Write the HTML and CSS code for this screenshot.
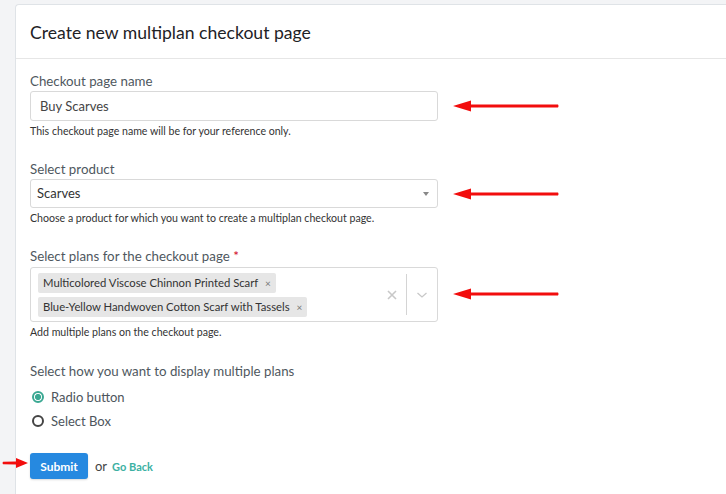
FILE: index.html
```html
<!DOCTYPE html>
<html>
<head>
<meta charset="utf-8">
<link rel="stylesheet" href="styles.css">
</head>
<body>
<div class="card">
  <div class="card-header"><h1 class="title">Create new multiplan checkout page</h1></div>
  <div class="card-body">
    <div class="group">
      <div class="label">Checkout page name</div>
      <div class="row">
        <div class="control input">Buy Scarves</div>
        <svg class="arrow" width="106" height="14" viewBox="0 0 106 14"><path d="M0 7 L18 1.5 L18 5.6 L105 5.4 Q106 7 105 8.6 L18 8.4 L18 12.5 Z" fill="#f20d0d"/></svg>
      </div>
      <div class="help">This checkout page name will be for your reference only.</div>
    </div>
    <div class="group">
      <div class="label">Select product</div>
      <div class="row">
        <div class="control select"><span>Scarves</span><span class="caret"></span></div>
        <svg class="arrow" width="106" height="14" viewBox="0 0 106 14"><path d="M0 7 L18 1.5 L18 5.6 L105 5.4 Q106 7 105 8.6 L18 8.4 L18 12.5 Z" fill="#f20d0d"/></svg>
      </div>
      <div class="help">Choose a product for which you want to create a multiplan checkout page.</div>
    </div>
    <div class="group">
      <div class="label">Select plans for the checkout page <span class="req">*</span></div>
      <div class="row">
        <div class="control multi">
          <div class="tags">
            <span class="tag">Multicolored Viscose Chinnon Printed Scarf <span class="tx">×</span></span>
            <span class="tag">Blue-Yellow Handwoven Cotton Scarf with Tassels <span class="tx">×</span></span>
          </div>
          <div class="indicators">
            <svg class="clear" width="10" height="10" viewBox="0 0 10 10"><path d="M1 1 L9 9 M9 1 L1 9" stroke="#c8c8c8" stroke-width="1.6"/></svg>
            <span class="sep"></span>
            <svg class="chev" width="12" height="8" viewBox="0 0 12 8"><path d="M1.5 2 L6 6 L10.5 2" stroke="#c8c8c8" stroke-width="1.3" fill="none"/></svg>
          </div>
        </div>
        <svg class="arrow" width="106" height="14" viewBox="0 0 106 14"><path d="M0 7 L18 1.5 L18 5.6 L105 5.4 Q106 7 105 8.6 L18 8.4 L18 12.5 Z" fill="#f20d0d"/></svg>
      </div>
      <div class="help">Add multiple plans on the checkout page.</div>
    </div>
    <div class="group radios">
      <div class="label">Select how you want to display multiple plans</div>
      <div class="radio"><span class="dot on"></span>Radio button</div>
      <div class="radio"><span class="dot"></span>Select Box</div>
    </div>
    <div class="actions">
      <svg class="small-arrow" width="26" height="12" viewBox="0 0 26 12"><path d="M26 6 L14 1 L14 4.6 L1 4.8 Q0 6 1 7.2 L14 7.4 L14 11 Z" fill="#f20d0d"/></svg>
      <button class="submit">Submit</button>
      <span class="or">or</span>
      <a class="back">Go Back</a>
    </div>
  </div>
</div>
</body>
</html>
```
FILE: styles.css
```css
html, body {
  margin: 0;
  padding: 0;
  background: #f3f4f6;
  overflow: hidden;
  height: 100%;
  font-family: Lato, "Open Sans", sans-serif;
}
.card {
  box-sizing: border-box;
  margin: 4px 0 0 15px;
  height: calc(100% - 4px);
  background: #fff;
  border: 1px solid #dfe3e7;
  border-right: 0;
  border-bottom: 0;
  border-radius: 4px 0 0 0;
}
.card-header {
  padding: 0 14px;
  height: 53px;
  border-bottom: 1px solid #e6e6e6;
  display: flex;
  align-items: center;
}
.title {
  margin: 2px 0 0;
  font-size: 17.6px;
  font-weight: 400;
  color: #1e2226;
}
.card-body {
  padding: 13px 14px 0;
}
.group {
  margin-bottom: 22px;
}
.label {
  font-size: 13.3px;
  line-height: 18px;
  color: #4f5860;
  margin-bottom: 1px;
}
.req { color: #d0021b; }
.row {
  display: flex;
  align-items: center;
}
.control {
  box-sizing: border-box;
  width: 408px;
  border: 1px solid #d9d9d9;
  border-radius: 3px;
  font-size: 13px;
  color: #444;
}
.input {
  height: 30px;
  line-height: 28px;
  padding: 0 9px;
}
.select {
  height: 29px;
  line-height: 27px;
  padding: 0 8px 0 6px;
  display: flex;
  justify-content: space-between;
  align-items: center;
  color: #333;
}
.caret {
  width: 0; height: 0;
  border-left: 3px solid transparent;
  border-right: 3px solid transparent;
  border-top: 4px solid #888;
}
.multi {
  height: 55px;
  margin-top: 1px;
  display: flex;
  align-items: center;
  padding: 3px 0 3px 7px;
}
.tags {
  flex: 1;
  display: flex;
  flex-direction: column;
  align-items: flex-start;
  gap: 4px;
}
.tag {
  background: #e6e6e6;
  border-radius: 2px;
  font-size: 11.3px;
  color: #333;
  height: 20px;
  line-height: 20px;
  padding: 0 5px;
}
.tx {
  font-size: 10px;
  color: #777;
  margin-left: 4px;
}
.indicators {
  display: flex;
  align-items: center;
  height: 41px;
}
.clear { margin-right: 9px; }
.sep {
  width: 1px;
  align-self: stretch;
  background: #d4d4d4;
}
.chev { margin: 0 9px 0 9px; }
.arrow {
  margin-left: 15px;
  flex: none;
}
.help {
  font-size: 10.6px;
  line-height: 14px;
  color: #333;
  margin-top: 3px;
}
.radios { margin-top: 23px; }
.radios .label { margin-bottom: 5px; }
.radio {
  display: flex;
  align-items: center;
  font-size: 13px;
  color: #4d555c;
  height: 24px;
}
.dot {
  box-sizing: border-box;
  width: 12px;
  height: 12px;
  border-radius: 50%;
  border: 2px solid #444;
  margin: 0 7px 0 2px;
}
.dot.on {
  border-color: #3aa892;
  background: radial-gradient(circle, #3aa892 0 2.8px, #fff 3.2px);
}
.actions {
  display: flex;
  align-items: center;
  margin-top: -2px;
  position: relative;
}
.small-arrow {
  position: absolute;
  left: -28px;
  top: 4px;
}
.submit {
  font-family: inherit;
  background: #2689e0;
  color: #fff;
  border: none;
  border-radius: 3px;
  font-size: 12px;
  font-weight: 700;
  width: 58px;
  height: 26px;
  padding: 0;
  box-shadow: 0 1px 2px rgba(0,0,0,0.15);
}
.or {
  font-size: 13px;
  color: #444;
  margin-left: 7px;
}
.back {
  font-size: 11px;
  font-weight: 700;
  color: #3cb1a3;
  margin-left: 5px;
}
```
